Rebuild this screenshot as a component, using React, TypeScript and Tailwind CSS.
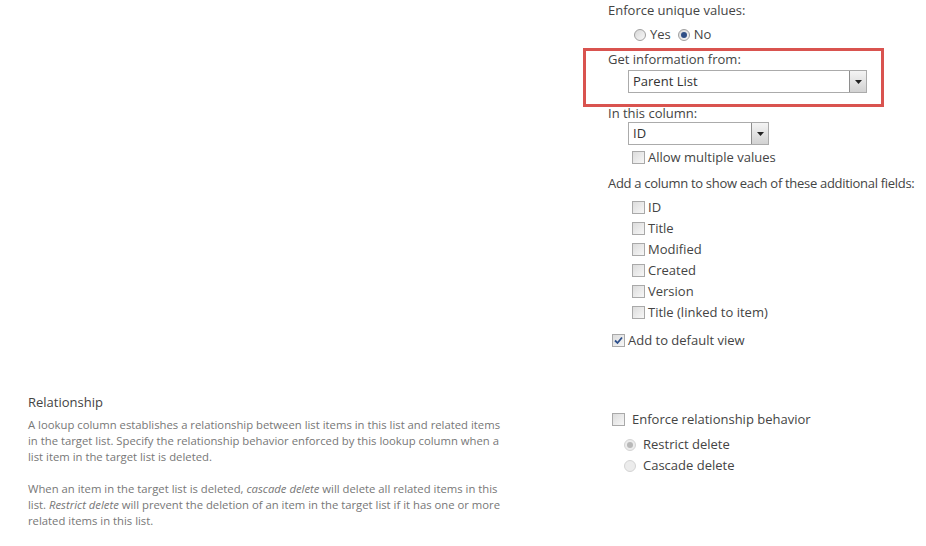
import React from 'react';

const font = { fontFamily: '"Open Sans", "Noto Sans", sans-serif' };

const Checkbox = ({ checked = false }: { checked?: boolean }) => (
  <span className="relative inline-block w-[13px] h-[13px] border border-[#a9a9a9] bg-gradient-to-br from-[#dcdcdc] to-[#f7f7f7] shrink-0">
    {checked && (
      <svg viewBox="0 0 11 11" className="absolute left-0 top-0 w-[11px] h-[11px]">
        <path d="M2 5.5 L4.5 8 L9 2.5" fill="none" stroke="#2c4f8c" strokeWidth="1.8" />
      </svg>
    )}
  </span>
);

const Radio = ({ checked = false, faded = false }: { checked?: boolean; faded?: boolean }) => (
  <span
    className={`relative inline-flex items-center justify-center w-[12px] h-[12px] rounded-full border shrink-0 ${
      faded ? 'border-[#d4d4d4] bg-[#ececec]' : 'border-[#a0a0a0] bg-gradient-to-br from-[#d8d8d8] to-[#f8f8f8]'
    }`}
  >
    {checked && (
      <span className={`w-[6px] h-[6px] rounded-full ${faded ? 'bg-[#b8b8b8]' : 'bg-[#2f4f86]'}`} />
    )}
  </span>
);

const Select = ({ value, width }: { value: string; width: string }) => (
  <div className={`flex items-stretch h-[23px] border border-[#ababab] bg-white ${width}`}>
    <span className="flex-1 pl-[4px] leading-[21px] text-[13px] text-[#333]">{value}</span>
    <span className="w-[17px] flex items-center justify-center border-l border-[#8e8e8e] bg-gradient-to-b from-[#f4f4f4] to-[#d2d2d2]">
      <svg viewBox="0 0 7 4" className="w-[7px] h-[4px]">
        <path d="M0 0 H7 L3.5 4 Z" fill="#222" />
      </svg>
    </span>
  </div>
);

const CheckRow = ({ label, checked = false }: { label: string; checked?: boolean }) => (
  <div className="flex items-center gap-[3px] h-[21px]">
    <Checkbox checked={checked} />
    <span>{label}</span>
  </div>
);

export default function App() {
  return (
    <div className="w-[926px] h-[546px] bg-white text-[13px] text-[#444] overflow-hidden" style={font}>
      <div className="flex">
        <div className="w-[583px] shrink-0" />
        <div className="flex flex-col">
          <div className="pl-[25px] h-[20px] leading-[20px]">Enforce unique values:</div>
          <div className="pl-[51px] mt-[5px] h-[20px] flex items-center gap-[4px]">
            <Radio />
            <span className="mr-[3px]">Yes</span>
            <Radio checked />
            <span>No</span>
          </div>
          <div className="mt-[3px] w-[301px] border-[3px] border-[#d9534f] pl-[22px] pb-[11px]">
            <div className="h-[16px] leading-[16px]">Get information from:</div>
            <div className="ml-[20px] mt-[3px]">
              <Select value="Parent List" width="w-[239px]" />
            </div>
          </div>
          <div className="pl-[25px] h-[12px] leading-[12px]">In this column:</div>
          <div className="pl-[45px] mt-[3px]">
            <Select value="ID" width="w-[141px]" />
          </div>
          <div className="pl-[49px] mt-[2px]">
            <CheckRow label="Allow multiple values" />
          </div>
          <div className="pl-[25px] mt-[5px] h-[20px] leading-[20px] whitespace-nowrap tracking-[-0.3px]">
            Add a column to show each of these additional fields:
          </div>
          <div className="pl-[49px] mt-[4px] flex flex-col">
            <CheckRow label="ID" />
            <CheckRow label="Title" />
            <CheckRow label="Modified" />
            <CheckRow label="Created" />
            <CheckRow label="Version" />
            <CheckRow label="Title (linked to item)" />
          </div>
          <div className="pl-[29px] mt-[7px]">
            <CheckRow label="Add to default view" checked />
          </div>
        </div>
      </div>

      <div className="flex mt-[41px]">
        <div className="w-[583px] shrink-0 pl-[28px]">
          <div className="text-[13px] text-[#444] h-[18px] leading-[18px] mt-[1px]">Relationship</div>
          <div className="mt-[6px] w-[480px] text-[11.3px] leading-[16px] text-[#777]">
            <p>
              A lookup column establishes a relationship between list items in this list and related items in the
              target list. Specify the relationship behavior enforced by this lookup column when a list item in the
              target list is deleted.
            </p>
            <p className="mt-[16px]">
              When an item in the target list is deleted, <i>cascade delete</i> will delete all related items in this
              list. <i>Restrict delete</i> will prevent the deletion of an item in the target list if it has one or
              more related items in this list.
            </p>
          </div>
        </div>
        <div className="flex flex-col pt-[17px]">
          <div className="pl-[29px] flex items-center gap-[7px] h-[21px]">
            <Checkbox />
            <span>Enforce relationship behavior</span>
          </div>
          <div className="pl-[41px] mt-[4px] flex items-center gap-[7px] h-[21px]">
            <Radio checked faded />
            <span>Restrict delete</span>
          </div>
          <div className="pl-[41px] flex items-center gap-[7px] h-[21px]">
            <Radio faded />
            <span>Cascade delete</span>
          </div>
        </div>
      </div>
    </div>
  );
}
